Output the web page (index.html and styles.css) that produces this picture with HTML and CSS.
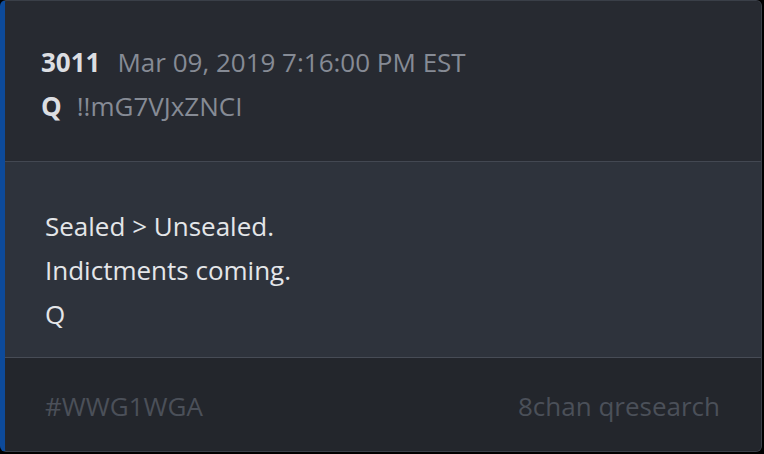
FILE: index.html
```html
<!DOCTYPE html>
<html>
<head>
<meta charset="utf-8">
<link rel="stylesheet" href="styles.css">
</head>
<body>
<div class="card">
  <div class="header">
    <div class="line"><span class="num">3011</span><span class="date">Mar 09, 2019 7:16:00 PM EST</span></div>
    <div class="line"><span class="name">Q</span><span class="trip">!!mG7VJxZNCI</span></div>
  </div>
  <div class="content">
    <div class="line">Sealed &gt; Unsealed.</div>
    <div class="line">Indictments coming.</div>
    <div class="line">Q</div>
  </div>
  <div class="footer">
    <span class="tag">#WWG1WGA</span>
    <span class="source">8chan qresearch</span>
  </div>
</div>
</body>
</html>
```
FILE: styles.css
```css
html, body {
  margin: 0;
  padding: 0;
  background: #000;
}
body {
  width: 764px;
  height: 454px;
  font-family: "Open Sans", "DejaVu Sans", sans-serif;
  font-size: 26px;
  line-height: 44px;
}
.card {
  width: 762px;
  height: 452px;
  box-sizing: border-box;
  border: 1px solid #3a3f48;
  border-left: 5px solid #0d4a9a;
  border-radius: 6px;
  overflow: hidden;
  display: flex;
  flex-direction: column;
  background: #272a31;
}
.header {
  padding: 39px 0 33px 36px;
  background: #272a31;
  border-bottom: 1px solid #434852;
}
.num {
  font-weight: 700;
  color: #dcdee2;
  margin-right: 17px;
}
.date {
  color: #868b95;
}
.name {
  font-weight: 700;
  color: #dcdee2;
  margin-right: 15px;
}
.trip {
  color: #868b95;
}
.content {
  padding: 42px 0 21px 40px;
  background: #2e333c;
  color: #e4e6e9;
  border-bottom: 1px solid #474c56;
}
.footer {
  flex: 1;
  display: flex;
  justify-content: space-between;
  align-items: flex-start;
  padding: 26px 41px 0 40px;
  background: #23262c;
  color: #4b5059;
}
```
